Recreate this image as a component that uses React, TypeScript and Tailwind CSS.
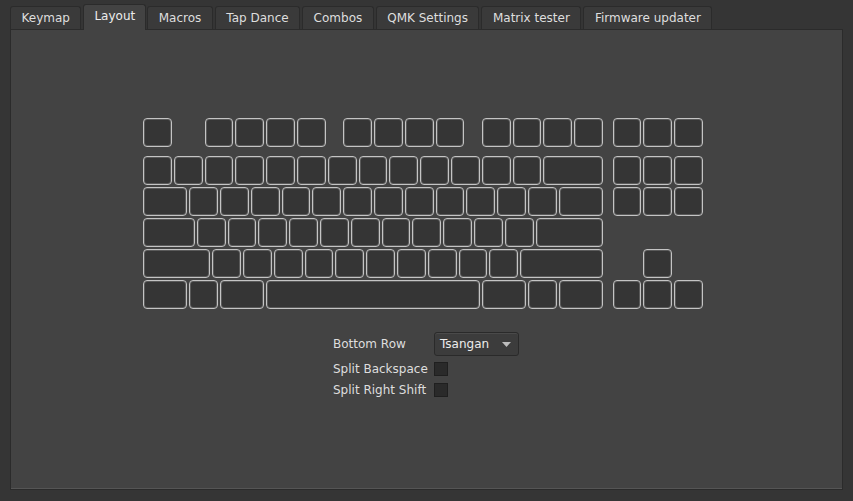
import React from 'react'

type K = { w: number; gap?: boolean }

const widthClass: Record<string, string> = {
    '0.25': 'w-[7.7px]',
    '0.5': 'w-[15.4px]',
    '1': 'w-[30.8px]',
    '1.5': 'w-[46.2px]',
    '1.75': 'w-[53.9px]',
    '2': 'w-[61.6px]',
    '2.25': 'w-[69.3px]',
    '2.75': 'w-[84.7px]',
    '7': 'w-[215.6px]',
}

const ones = (n: number): K[] => Array.from({ length: n }, () => ({ w: 1 }))
const sp = (w: number): K => ({ w, gap: true })

// tsangan ansi layout, in key units
const rows: K[][] = [
    [{ w: 1 }, sp(1), ...ones(4), sp(0.5), ...ones(4), sp(0.5), ...ones(4), sp(0.25), ...ones(3)],
    [...ones(13), { w: 2 }, sp(0.25), ...ones(3)],
    [{ w: 1.5 }, ...ones(12), { w: 1.5 }, sp(0.25), ...ones(3)],
    [{ w: 1.75 }, ...ones(11), { w: 2.25 }],
    [{ w: 2.25 }, ...ones(10), { w: 2.75 }, sp(0.25), sp(1), { w: 1 }],
    [{ w: 1.5 }, { w: 1 }, { w: 1.5 }, { w: 7 }, { w: 1.5 }, { w: 1 }, { w: 1.5 }, sp(0.25), ...ones(3)],
]

const tabs = ['Keymap', 'Layout', 'Macros', 'Tap Dance', 'Combos', 'QMK Settings', 'Matrix tester', 'Firmware updater']

const Key = ({ k }: { k: K }) => (
    <div className={`${widthClass[String(k.w)]} h-[31px] shrink-0`}>
        {!k.gap && (
            <div className="h-[29px] w-[calc(100%-2px)] rounded-[4px] border border-[#c4c4c4] bg-[#353535] shadow-[inset_0_0_0_1px_#5a5a5a]" />
        )}
    </div>
)

const App = () => {
    return (
        <div
            className="w-[853px] h-[501px] bg-[#353535] text-[#dedede] text-[12px] overflow-hidden"
            style={{ fontFamily: '"DejaVu Sans", sans-serif' }}
        >
            {/* Tabs */}
            <div className="flex items-end h-[29px] pl-[10px] gap-[1px]">
                {tabs.map((t) =>
                    t === 'Layout' ? (
                        <div
                            key={t}
                            className="h-[26px] px-[10px] flex items-center bg-[#434343] border border-b-0 border-[#2b2b2b] rounded-t-[3px] relative z-10 mb-[-1px] pb-[3px] text-[#ececec]"
                        >
                            {t}
                        </div>
                    ) : (
                        <div
                            key={t}
                            className="h-[23px] px-[10.5px] flex items-center bg-[#3a3a3a] border border-b-0 border-[#2b2b2b] rounded-t-[3px] mr-[1px]"
                        >
                            {t}
                        </div>
                    )
                )}
            </div>

            {/* Panel */}
            <div className="mx-[10px] h-[461px] bg-[#434343] border border-[#2b2b2b] shadow-[inset_0_-1px_0_#555555]">
                <div className="pt-[88px] pl-[132px]">
                    {rows.map((row, i) => (
                        <div key={i} className={`flex ${i === 0 ? 'mb-[7px]' : ''}`}>
                            {row.map((k, j) => (
                                <Key key={j} k={k} />
                            ))}
                        </div>
                    ))}
                </div>

                {/* Options */}
                <div className="ml-[322px] mt-[21px] grid grid-cols-[101px_auto] items-center">
                    <div>Bottom Row</div>
                    <div className="h-[24px] w-[85px] rounded-[3px] border border-[#2a2a2a] bg-[#3c3c3c] flex items-center justify-between pl-[5px] pr-[7px] shadow-[inset_0_1px_0_#4a4a4a]">
                        <span className="text-[#ececec]">Tsangan</span>
                        <svg width="9" height="5" viewBox="0 0 9 5">
                            <path d="M0 0 L9 0 L4.5 5 Z" fill="#bdbdbd" />
                        </svg>
                    </div>
                    <div className="mt-[2px] h-[21px] flex items-center">Split Backspace</div>
                    <div className="mt-[2px] h-[14px] w-[14px] bg-[#2a2a2a] border border-[#1f1f1f]" />
                    <div className="h-[21px] flex items-center">Split Right Shift</div>
                    <div className="h-[14px] w-[14px] bg-[#2a2a2a] border border-[#1f1f1f]" />
                </div>
            </div>
        </div>
    )
}

export default App
